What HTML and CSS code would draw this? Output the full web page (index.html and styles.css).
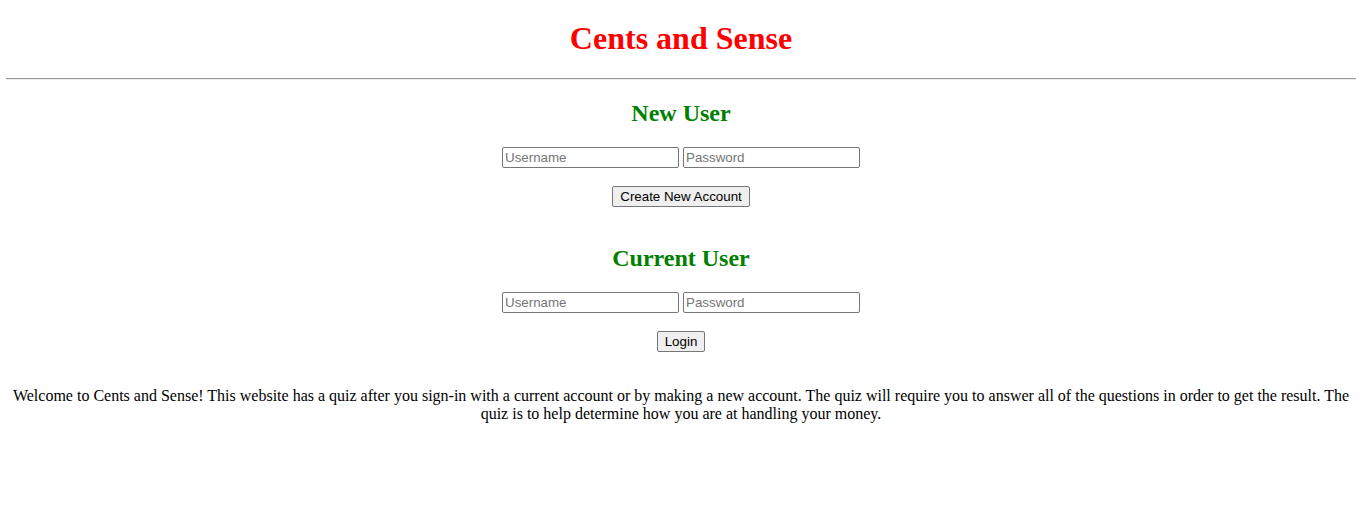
FILE: index.html
```html
<!DOCTYPE html>
<html>
<head>
<meta charset="utf-8">
<title>Cents and Sense</title>
<link rel="stylesheet" href="styles.css">
</head>
<body>
<h1 class="title">Cents and Sense</h1>
<hr class="rule">
<section class="block">
  <h2 class="heading">New User</h2>
  <div class="fields">
    <input class="field" type="text" placeholder="Username">
    <input class="field" type="password" placeholder="Password">
  </div>
  <div class="actions"><button class="btn" type="button">Create New Account</button></div>
</section>
<section class="block">
  <h2 class="heading">Current User</h2>
  <div class="fields">
    <input class="field" type="text" placeholder="Username">
    <input class="field" type="password" placeholder="Password">
  </div>
  <div class="actions"><button class="btn" type="button">Login</button></div>
</section>
<p class="intro">Welcome to Cents and Sense! This website has a quiz after you sign-in with a current account or by making a new account. The quiz will require you to answer all of the questions in order to get the result. The quiz is to help determine how you are at handling your money.</p>
</body>
</html>
```
FILE: styles.css
```css
html, body {
  background: #ffffff;
}
body {
  margin: 8px 8px 8px 6px;
  font-family: "Liberation Serif", "Times New Roman", serif;
  font-size: 16px;
  color: #000000;
  text-align: center;
}
.title {
  color: #ff0000;
  font-size: 32px;
  font-weight: bold;
  margin: 12px 0 21px;
}
.rule {
  border: none;
  border-top: 1px solid #9a9a9a;
  border-bottom: 1px solid #eeeeee;
  margin: 0;
}
.block {
  margin: 0;
  padding-bottom: 18px;
}
.heading {
  color: #008000;
  font-size: 24px;
  font-weight: bold;
  margin: 20px 0;
}
.fields {
  display: flex;
  justify-content: center;
  gap: 4px;
}
.field {
  width: 177px;
  height: 21px;
  box-sizing: border-box;
  border: 1px solid #767676;
  border-radius: 2px;
  padding: 1px 2px;
  font-family: "Liberation Sans", Arial, sans-serif;
  font-size: 13.33px;
  color: #000;
  background: #fff;
}
.field::placeholder {
  color: #757575;
}
.actions {
  margin-top: 18px;
}
.btn {
  height: 21px;
  box-sizing: border-box;
  border: 1px solid #767676;
  border-radius: 2px;
  padding: 1px 7px;
  background: #efefef;
  font-family: "Liberation Sans", Arial, sans-serif;
  font-size: 13.33px;
  color: #000;
}
.intro {
  margin: 17px 0 0;
  line-height: 18px;
}
```
